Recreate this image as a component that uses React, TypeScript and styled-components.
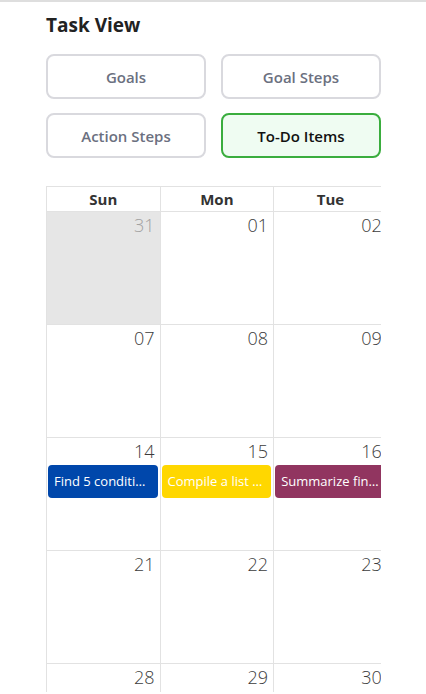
import React from 'react';
import styled, {createGlobalStyle} from "styled-components";

const GlobalStyle = createGlobalStyle`
    html, body {
        margin: 0;
        padding: 0;
        background: #fff;
        font-family: "Open Sans", "Noto Sans", sans-serif;
    }
`;

type Day = { num: string; muted?: boolean };
type Event = { day: string; title: string; color: string };

const weeks: Day[][] = [
    [{num: "31", muted: true}, {num: "01"}, {num: "02"}, {num: "03"}, {num: "04"}, {num: "05"}, {num: "06"}],
    [{num: "07"}, {num: "08"}, {num: "09"}, {num: "10"}, {num: "11"}, {num: "12"}, {num: "13"}],
    [{num: "14"}, {num: "15"}, {num: "16"}, {num: "17"}, {num: "18"}, {num: "19"}, {num: "20"}],
    [{num: "21"}, {num: "22"}, {num: "23"}, {num: "24"}, {num: "25"}, {num: "26"}, {num: "27"}],
    [{num: "28"}, {num: "29"}, {num: "30"}, {num: "01", muted: true}, {num: "02", muted: true}, {num: "03", muted: true}, {num: "04", muted: true}],
];

const events: Event[] = [
    {day: "14", title: "Find 5 conditions to research", color: "#0047ab"},
    {day: "15", title: "Compile a list of sources", color: "#ffd700"},
    {day: "16", title: "Summarize findings", color: "#913560"},
];

const dayNames = ["Sun", "Mon", "Tue", "Wed", "Thu", "Fri", "Sat"];
const tabs = ["Goals", "Goal Steps", "Action Steps", "To-Do Items"];

export default function App() {
    return (
        <Page>
            <GlobalStyle/>
            <Title>Task View</Title>
            <TabGrid>
                {tabs.map(t => (
                    <TabButton key={t} $active={t === "To-Do Items"}>{t}</TabButton>
                ))}
            </TabGrid>
            <CalendarFrame>
                <Calendar>
                    <HeaderRow>
                        {dayNames.map(d => <HeaderCell key={d}>{d}</HeaderCell>)}
                    </HeaderRow>
                    {weeks.map((week, wi) => (
                        <WeekRow key={wi}>
                            {week.map((day, di) => {
                                const dayEvents = day.muted ? [] : events.filter(e => e.day === day.num);
                                return (
                                    <DayCell key={di} $muted={wi === 0 && day.muted}>
                                        <DayNumber $muted={day.muted}>{day.num}</DayNumber>
                                        {dayEvents.map(e => (
                                            <EventChip key={e.title} $color={e.color}>{e.title}</EventChip>
                                        ))}
                                    </DayCell>
                                );
                            })}
                        </WeekRow>
                    ))}
                </Calendar>
            </CalendarFrame>
        </Page>
    );
}

const Page = styled.div`
    border-top: 2px solid #dedede;
    padding: 10px 45px 0 46px;
    height: 692px;
    overflow: hidden;
    box-sizing: border-box;
`;

const Title = styled.h1`
    font-size: 19px;
    font-weight: 700;
    color: #222;
    margin: 0 0 16px;
    line-height: 26px;
`;

const TabGrid = styled.div`
    display: grid;
    grid-template-columns: 1fr 1fr;
    column-gap: 15px;
    row-gap: 14px;
    margin-bottom: 28px;
`;

const TabButton = styled.button<{ $active?: boolean }>`
    height: 45px;
    border-radius: 8px;
    border: 2px solid ${p => p.$active ? "#3aad3e" : "#d9d9de"};
    background: ${p => p.$active ? "#effcf2" : "#fff"};
    color: ${p => p.$active ? "#111" : "#6b7080"};
    font-family: "Open Sans", sans-serif;
    font-size: 15px;
    font-weight: 600;
    cursor: pointer;
    padding: 0;
`;

const CalendarFrame = styled.div`
    width: 335px;
    overflow: hidden;
`;

const Calendar = styled.div`
    width: 795px;
    border-left: 1px solid #e2e2e2;
    border-top: 1px solid #e2e2e2;
`;

const HeaderRow = styled.div`
    display: grid;
    grid-template-columns: repeat(7, 1fr);
    height: 24px;
    border-bottom: 1px solid #e2e2e2;
`;

const HeaderCell = styled.div`
    display: flex;
    align-items: center;
    justify-content: center;
    font-size: 15px;
    font-weight: 700;
    color: #333;
    border-right: 1px solid #e2e2e2;
`;

const WeekRow = styled.div`
    display: grid;
    grid-template-columns: repeat(7, 1fr);
    height: 113px;
    border-bottom: 1px solid #e2e2e2;
    box-sizing: border-box;
`;

const DayCell = styled.div<{ $muted?: boolean }>`
    display: flex;
    flex-direction: column;
    background: ${p => p.$muted ? "#e6e6e6" : "#fff"};
    border-right: 1px solid #e2e2e2;
    min-width: 0;
`;

const DayNumber = styled.div<{ $muted?: boolean }>`
    text-align: right;
    font-size: 18px;
    font-weight: 300;
    color: ${p => p.$muted ? "#a2a2a2" : "#3c3c3c"};
    padding: 2px 5px 0 0;
    line-height: 22px;
    height: 25px;
`;

const EventChip = styled.div<{ $color: string }>`
    margin: 0 2px 0 1px;
    height: 33px;
    line-height: 33px;
    padding: 0 6px;
    border-radius: 4px;
    background: ${p => p.$color};
    color: #fff;
    font-size: 13px;
    white-space: nowrap;
    overflow: hidden;
    text-overflow: ellipsis;
`;
